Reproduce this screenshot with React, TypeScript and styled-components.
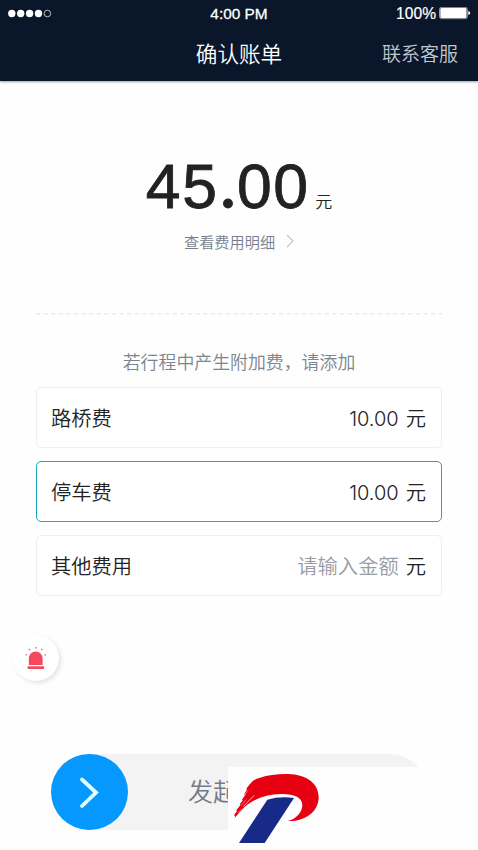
import React from 'react';
import styled, { createGlobalStyle } from 'styled-components';

const GlobalStyle = createGlobalStyle`
  * { box-sizing: border-box; }
  body {
    margin: 0;
    background: #fefefe;
    font-family: Inter, "Noto Sans CJK SC", sans-serif;
    color: #222;
  }
`;

const Screen = styled.main`
  width: 478px;
  height: 850px;
  overflow: hidden;
  display: flex;
  flex-direction: column;
`;

const Header = styled.header`
  flex: none;
  height: 81px;
  background: #0a162a;
  color: #fff;
  box-shadow: 0 1px 2px rgba(10, 22, 42, 0.4);
`;

const StatusBar = styled.div`
  height: 27px;
  padding: 0 8px;
  display: grid;
  grid-template-columns: 1fr auto 1fr;
  align-items: center;
  font-size: 15px;
  font-weight: 500;
  line-height: 27px;
`;

const Clock = styled.span`
  font-family: "Liberation Sans", sans-serif;
  font-size: 15.4px;
  -webkit-text-stroke: 0.3px #fff;
`;

const Battery = styled.div`
  display: flex;
  justify-content: flex-end;
  align-items: center;
  gap: 3px;
  font-family: "Liberation Sans", sans-serif;
  font-size: 15.6px;
  -webkit-text-stroke: 0.2px #fff;
  margin-right: -1px;
`;

const NavBar = styled.div`
  height: 54px;
  padding: 0 20px;
  display: grid;
  grid-template-columns: 1fr auto 1fr;
  align-items: center;
`;

const Title = styled.h1`
  grid-column: 2;
  margin: 0;
  font-size: 21.6px;
  font-weight: 350;
  line-height: 54px;
`;

const Support = styled.a`
  justify-self: end;
  padding-top: 2px;
  font-size: 19px;
  line-height: 52px;
  font-weight: 350;
  color: #c3c8cf;
`;

const Total = styled.section`
  height: 232px;
  padding-top: 67px;
  display: flex;
  flex-direction: column;
  align-items: center;
`;

const Amount = styled.div`
  height: 74px;
  display: flex;
  align-items: baseline;
  gap: 5.5px;
  line-height: 74px;
`;

const Figure = styled.span`
  font-family: "Liberation Sans", sans-serif;
  font-size: 62.5px;
  letter-spacing: 1.6px;
  -webkit-text-stroke: 0.8px #222;
`;

const DecimalPoint = styled.span`
  font-family: Inter, sans-serif;
  font-size: 62.5px;
  font-weight: 500;
  letter-spacing: -0.5px;
`;

const Currency = styled.span`
  font-size: 17px;
  font-weight: 350;
`;

const DetailLink = styled.a`
  height: 24px;
  margin-top: 7px;
  display: flex;
  align-items: center;
  gap: 11px;
  font-size: 15.2px;
  font-weight: 350;
  color: #777f8d;
`;

const Extras = styled.section`
  margin: 0 36px;
  display: flex;
  flex-direction: column;
`;

const Divider = styled.svg`
  display: block;
  width: 406px;
  height: 2px;
`;

const Hint = styled.p`
  margin: 33px 0 10px;
  height: 29px;
  line-height: 29px;
  text-align: center;
  font-size: 17.9px;
  font-weight: 350;
  color: #7b8591;
`;

const FeeList = styled.div`
  display: grid;
  grid-auto-rows: 61px;
  gap: 13px;
`;

const FeeRow = styled.label<{ $active?: boolean }>`
  display: flex;
  align-items: center;
  padding: 2px 15px 0 14px;
  border: ${p => (p.$active ? '1.5px solid #1cabbd' : '1px solid #eeeff0')};
  border-radius: 5px;
  background: #fff;
  font-size: 20.3px;
  font-weight: 350;
  line-height: 30px;
`;

const FeeValue = styled.span<{ $empty?: boolean }>`
  margin-left: auto;
  margin-right: 7px;
  font-size: ${p => (p.$empty ? '20.3px' : '20px')};
  font-weight: ${p => (p.$empty ? 350 : 300)};
  color: ${p => (p.$empty ? '#989ca5' : '#222')};
`;

const AlarmButton = styled.button`
  flex: none;
  width: 46px;
  height: 46px;
  margin: 39px 0 0 13px;
  padding: 0;
  border: 0;
  border-radius: 50%;
  background: #fff;
  box-shadow: 2px 2px 4px rgba(0, 0, 0, 0.11);

  svg { display: block; }
`;

const Footer = styled.footer`
  position: relative;
  flex: none;
  height: 97px;
  margin-top: 72px;
  padding: 0.5px 50px 0 51px;
`;

const SlideTrack = styled.div`
  height: 76.5px;
  border-radius: 38.25px;
  background: #f3f3f3;
  display: flex;
  align-items: center;
  gap: 60.5px;
  color: #737b88;
  font-size: 25px;
  font-weight: 350;
  line-height: 36px;
  white-space: nowrap;
`;

const SlideHandle = styled.div`
  width: 76.5px;
  height: 76.5px;
  border-radius: 50%;
  background: #0598ff;

  svg { display: block; }
`;

const BrandCover = styled.div`
  position: absolute;
  left: 228px;
  top: 14px;
  right: 0;
  bottom: 0;
  background: #fefefe;

  svg { display: block; }
`;

const fees = [
  { name: '路桥费', value: '10.00' },
  { name: '停车费', value: '10.00', active: true },
  { name: '其他费用', value: '' },
];

function Signal() {
  return (
    <svg width="44" height="10" viewBox="0 0 44 10" fill="#fff">
      <circle cx="3.8" cy="4.5" r="3.7" />
      <circle cx="12.7" cy="4.5" r="3.7" />
      <circle cx="21.6" cy="4.5" r="3.7" />
      <circle cx="30.5" cy="4.5" r="3.7" />
      <circle cx="39.4" cy="4.5" r="3.3" fill="none" stroke="#fff" strokeWidth="0.7" />
    </svg>
  );
}

function BatteryIcon() {
  return (
    <svg width="32" height="13" viewBox="0 0 32 13">
      <rect x="0.5" y="0.3" width="27.8" height="11.4" rx="2" fill="none" stroke="#a8afb8" strokeWidth="0.9" />
      <rect x="1.3" y="1.1" width="26.2" height="9.8" rx="1.2" fill="#fff" />
      <path d="M29.3 3.9q2 .5 2 2.1t-2 2.1z" fill="#fff" />
    </svg>
  );
}

function AlarmIcon() {
  return (
    <svg width="46" height="46" viewBox="0 0 46 46" fill="#f2495c">
      <path d="M15.8 30V23.5a6.9 6.9 0 0 1 13.8 0V30z" />
      <rect x="14.5" y="31.3" width="16.6" height="2.6" rx="0.7" />
      <g fill="#ef8c92">
        <circle cx="23" cy="12.7" r="1" />
        <circle cx="16.5" cy="14.4" r="1" />
        <circle cx="28.7" cy="14.4" r="1" />
        <circle cx="13.2" cy="19.7" r="0.9" />
        <circle cx="32.3" cy="20" r="0.9" />
      </g>
    </svg>
  );
}

function BrandMark() {
  return (
    <svg width="96" height="83" viewBox="24 81 288 249">
      <path
        fill="#e60012"
        d="M43 235L46 228L42 226L51 213L49 211L62 194L59 193L69 181L65 181L77 163L72 165L81 148L79 146L88 134Q98 119 120 113Q157 101 203 102C263 103 296 133 296 171C296 220 248 246 203 243C232 235 247 215 247 194C247 171 217 161 184 162C132 163 91 181 63 212Z"
      />
      <g fill="none" stroke="#fff" strokeLinecap="round">
        <path d="M71 199Q82 185 102 167" strokeWidth="2" />
        <path d="M65 196L77 180M75 165L83 153M54 218L64 207" strokeWidth="1.2" />
      </g>
      <path fill="#172a88" d="M142 179Q180 168 222 174L134 309H57Z" />
    </svg>
  );
}

export default function App() {
  return (
    <>
      <GlobalStyle />
      <Screen>
        <Header>
          <StatusBar>
            <Signal />
            <Clock>4:00 PM</Clock>
            <Battery>
              100%
              <BatteryIcon />
            </Battery>
          </StatusBar>
          <NavBar>
            <Title>确认账单</Title>
            <Support>联系客服</Support>
          </NavBar>
        </Header>
        <Total>
          <Amount>
            <Figure>
              45<DecimalPoint>.</DecimalPoint>00
            </Figure>
            <Currency>元</Currency>
          </Amount>
          <DetailLink>
            查看费用明细
            <svg width="8" height="14" viewBox="0 0 8 14" fill="none" stroke="#c3c7cc" strokeWidth="1.2">
              <path d="M1 1l6 6-6 6" />
            </svg>
          </DetailLink>
        </Total>
        <Extras>
          <Divider>
            <path d="M0 .75H406" stroke="#dedfe1" strokeWidth="1.1" strokeDasharray="4 3.6" />
          </Divider>
          <Hint>若行程中产生附加费，请添加</Hint>
          <FeeList>
            {fees.map(fee => (
              <FeeRow key={fee.name} $active={fee.active}>
                {fee.name}
                <FeeValue $empty={!fee.value}>{fee.value || '请输入金额'}</FeeValue>
                元
              </FeeRow>
            ))}
          </FeeList>
        </Extras>
        <AlarmButton aria-label="报警">
          <AlarmIcon />
        </AlarmButton>
        <Footer>
          <SlideTrack>
            <SlideHandle>
              <svg width="76" height="76" viewBox="0 0 76 76" fill="none" stroke="#eaffff" strokeWidth="3.8" strokeLinecap="round">
                <path d="M31 25.5L45 38.5L31 52" />
              </svg>
            </SlideHandle>
            发起收款
          </SlideTrack>
          <BrandCover>
            <BrandMark />
          </BrandCover>
        </Footer>
      </Screen>
    </>
  );
}
